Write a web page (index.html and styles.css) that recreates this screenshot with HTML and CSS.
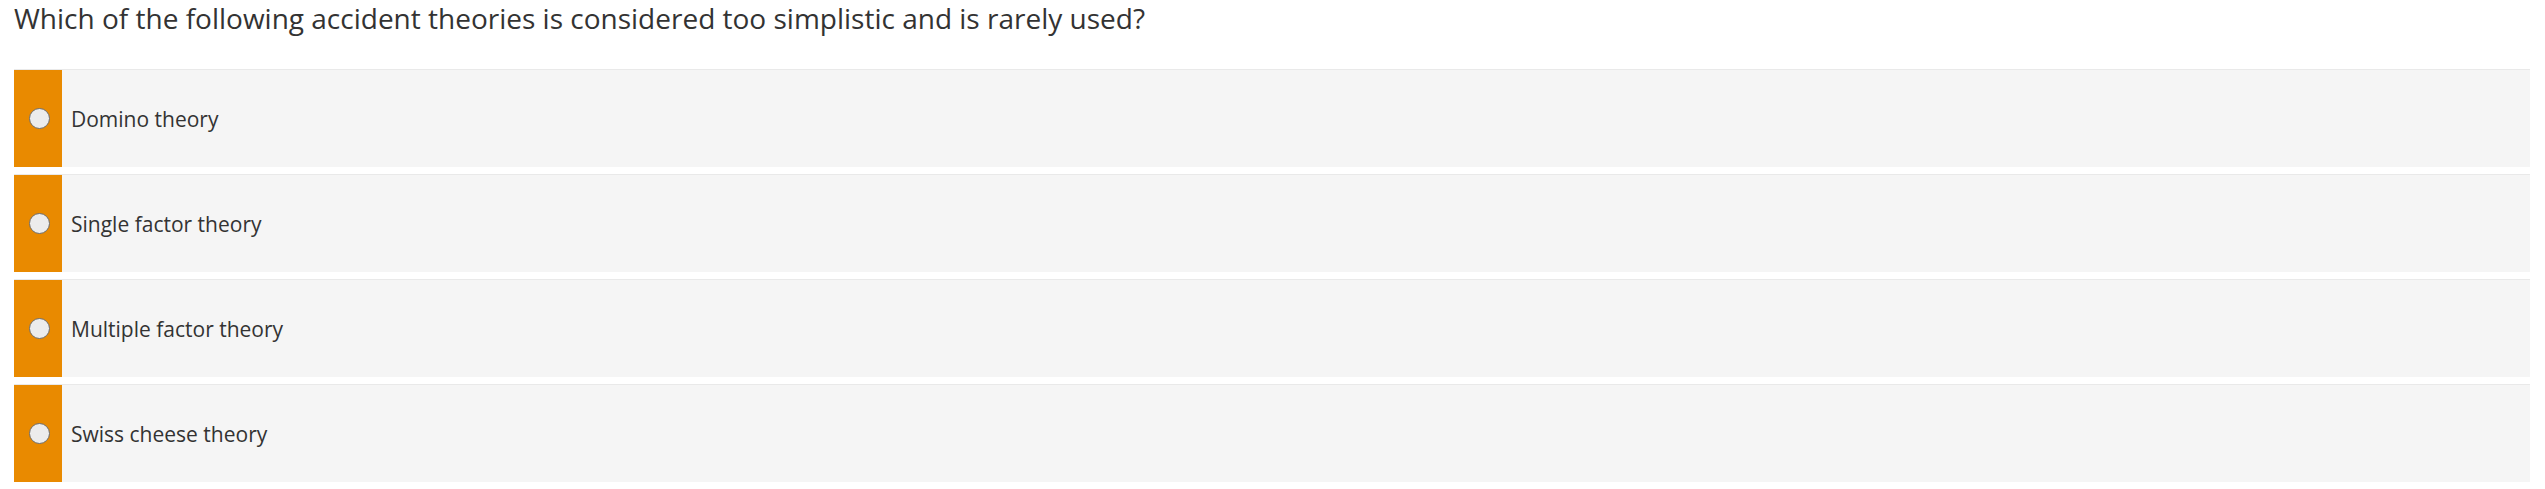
FILE: index.html
```html
<!DOCTYPE html>
<html lang="en">
<head>
    <meta charset="UTF-8">
    <meta name="viewport" content="width=device-width, initial-scale=1.0">
    <title>Quiz question</title>
    <link rel="stylesheet" href="styles.css">
</head>
<body>
    <div class="question">
        <h1 class="question-title">Which of the following accident theories is considered too simplistic and is rarely used?</h1>
        <div class="answers">
            <label class="answer">
                <span class="answer-mark"><input type="radio" name="answer" value="domino"></span>
                <span class="answer-text">Domino theory</span>
            </label>
            <label class="answer">
                <span class="answer-mark"><input type="radio" name="answer" value="single"></span>
                <span class="answer-text">Single factor theory</span>
            </label>
            <label class="answer">
                <span class="answer-mark"><input type="radio" name="answer" value="multiple"></span>
                <span class="answer-text">Multiple factor theory</span>
            </label>
            <label class="answer">
                <span class="answer-mark"><input type="radio" name="answer" value="swiss"></span>
                <span class="answer-text">Swiss cheese theory</span>
            </label>
        </div>
    </div>
</body>
</html>
```

FILE: styles.css
```css
body {
    font-family: "Open Sans", Arial, sans-serif;
    background-color: #fff;
    color: #333;
    margin: 0;
}
.question {
    padding: 0 15px 0 14px;
}
.question-title {
    font-size: 28px;
    font-weight: normal;
    line-height: 36px;
    margin: 0 0 33px 0;
    color: #333;
}
.answers {
    display: flex;
    flex-direction: column;
    gap: 7px;
}
.answer {
    display: flex;
    height: 97px;
    background-color: #f5f5f5;
    border-top: 1px solid #e9e9e9;
    cursor: pointer;
}
.answer-mark {
    width: 48px;
    background-color: #e98a00;
    display: flex;
    align-items: center;
    justify-content: center;
}
.answer-mark input {
    appearance: none;
    -webkit-appearance: none;
    box-sizing: border-box;
    width: 21px;
    height: 21px;
    margin: 0 0 0 3px;
    border: 1px solid #6e6e6e;
    border-radius: 50%;
    background-color: #ececec;
}
.answer-text {
    display: flex;
    align-items: center;
    padding-left: 9px;
    font-size: 21px;
    color: #333;
}
```
